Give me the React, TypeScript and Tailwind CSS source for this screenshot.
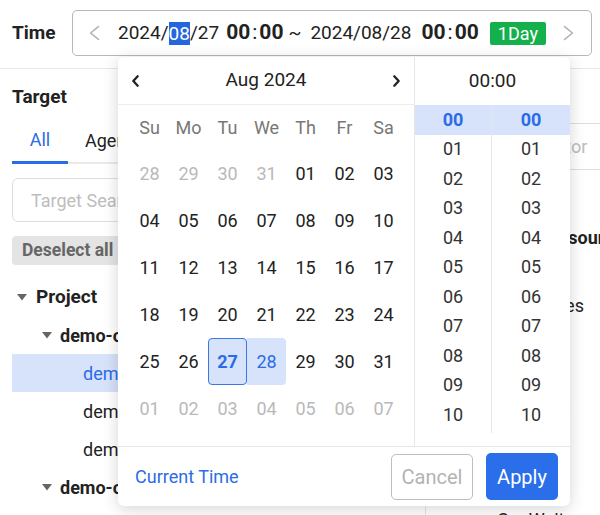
import React from "react";

const Chev = ({ dir, color, w, h, sw }: { dir: "l" | "r"; color: string; w: number; h: number; sw: number }) => (
  <svg width={w} height={h} viewBox={`0 0 ${w} ${h}`} className="shrink-0">
    <path
      d={dir === "l" ? `M${w - sw} ${sw} L${sw} ${h / 2} L${w - sw} ${h - sw}` : `M${sw} ${sw} L${w - sw} ${h / 2} L${sw} ${h - sw}`}
      fill="none"
      stroke={color}
      strokeWidth={sw}
      strokeLinecap="round"
      strokeLinejoin="round"
    />
  </svg>
);

const Caret = () => (
  <svg width="10" height="7" viewBox="0 0 10 7" className="shrink-0">
    <polygon points="0,0 10,0 5,6.5" fill="#666" />
  </svg>
);

const BoldTime = ({ cls }: { cls: string }) => (
  <span className={`flex items-center text-[21px] font-bold text-[#222] ${cls}`}>
    <span>00</span>
    <span className="mx-[2px] font-normal">:</span>
    <span>00</span>
  </span>
);

type Day = { t: string; k?: "muted" | "start" | "range" };

const weeks: Day[][] = [
  [{ t: "28", k: "muted" }, { t: "29", k: "muted" }, { t: "30", k: "muted" }, { t: "31", k: "muted" }, { t: "01" }, { t: "02" }, { t: "03" }],
  [{ t: "04" }, { t: "05" }, { t: "06" }, { t: "07" }, { t: "08" }, { t: "09" }, { t: "10" }],
  [{ t: "11" }, { t: "12" }, { t: "13" }, { t: "14" }, { t: "15" }, { t: "16" }, { t: "17" }],
  [{ t: "18" }, { t: "19" }, { t: "20" }, { t: "21" }, { t: "22" }, { t: "23" }, { t: "24" }],
  [{ t: "25" }, { t: "26" }, { t: "27", k: "start" }, { t: "28", k: "range" }, { t: "29" }, { t: "30" }, { t: "31" }],
  [{ t: "01", k: "muted" }, { t: "02", k: "muted" }, { t: "03", k: "muted" }, { t: "04", k: "muted" }, { t: "05", k: "muted" }, { t: "06", k: "muted" }, { t: "07", k: "muted" }],
];

const weekdays = ["Su", "Mo", "Tu", "We", "Th", "Fr", "Sa"];
const hours = ["00", "01", "02", "03", "04", "05", "06", "07", "08", "09", "10"];

function dayClass(k?: string) {
  if (k === "muted") return "text-[#b9b9b9]";
  if (k === "start") return "rounded-[4px] border-[1.5px] border-[#3b76e3] bg-[#d7e2fb] font-bold text-[#2b6ce6]";
  if (k === "range") return "rounded-r-[4px] bg-[#d7e2fb] text-[#2b6ce6]";
  return "text-[#222]";
}

const TimeCol = ({ border }: { border: boolean }) => (
  <div className={`w-[77px] flex flex-col ${border ? "border-r border-[#e6e6e6]" : "flex-1"}`}>
    {hours.map((h, i) => (
      <div
        key={h}
        className={`h-[29.5px] shrink-0 flex items-center justify-center text-[18px] leading-[22px] ${
          i === 0 ? "bg-[#d7e2fb] text-[#2b6ce6] font-bold" : "text-[#333]"
        }`}
      >
        {h}
      </div>
    ))}
  </div>
);

export default function App() {
  return (
    <div className="relative w-[600px] h-[515px] overflow-hidden bg-white text-[#222] [font-family:Roboto,sans-serif]">
      {/* Top bar */}
      <div className="flex h-[69px] border-b border-[#e8e8e8] pl-[12px] pt-[10px]">
        <div className="w-[60px] h-[46px] flex items-center text-[19px] font-bold">Time</div>
        <div className="flex items-center w-[520px] h-[46px] border border-[#b8b8b8] rounded-[5px] pl-[16px]">
          <Chev dir="l" color="#b3b3b3" w={11} h={16} sw={1.6} />
          <div className="ml-[18px] flex items-center text-[19px] text-[#222]">
            <span>2024/</span>
            <span className="bg-[#2366de] text-white leading-[23px]">08</span>
            <span>/27</span>
          </div>
          <BoldTime cls="ml-[7px]" />
          <span className="ml-[5px] text-[19px]">~</span>
          <span className="ml-[9px] text-[19px]">2024/08/28</span>
          <BoldTime cls="ml-[10px]" />
          <span className="ml-[11px] h-[23px] px-[8px] bg-[#14b04b] text-white text-[18px] rounded-[2px] flex items-center">
            1Day
          </span>
          <span className="ml-[17px]">
            <Chev dir="r" color="#b3b3b3" w={11} h={16} sw={1.6} />
          </span>
        </div>
      </div>

      {/* Main background */}
      <div className="flex h-[446px]">
        {/* Left panel */}
        <div className="w-[426px] shrink-0 border-r border-[#e5e5e5] pl-[12px]">
          <div className="pt-[16px] text-[19px] font-bold leading-[24px]">Target</div>
          <div className="mt-[9px] flex h-[46px] border-b-[2px] border-[#eaeaea]">
            <div className="w-[56px] flex items-center justify-center text-[18px] text-[#2b6ce6] border-b-[3px] border-[#2b6ce6] -mb-[2px]">
              All
            </div>
            <div className="pl-[17px] flex items-center text-[18px] text-[#222]">Agent</div>
            <div className="pl-[30px] flex items-center text-[18px] text-[#222]">Group</div>
          </div>
          <div className="mt-[14px] h-[44px] w-[400px] rounded-[6px] border border-[#dedede] pl-[18px] flex items-center text-[18px] text-[#bdbdbd]">
            Target Search
          </div>
          <div className="mt-[14px] h-[29px] inline-flex items-center px-[10px] bg-[#e4e4e4] rounded-[4px] text-[17.5px] font-bold text-[#666]">
            Deselect all
          </div>
          <div className="mt-[13px] flex flex-col">
            <div className="h-[38px] flex items-center pl-[5px] gap-[9px]">
              <Caret />
              <span className="text-[19px] font-bold">Project</span>
            </div>
            <div className="h-[38px] flex items-center pl-[30px] gap-[8px]">
              <Caret />
              <span className="text-[18px] font-bold">demo-cluster-01</span>
            </div>
            <div className="h-[38px] flex items-center pl-[71px] bg-[#d7e2fb] text-[18px] text-[#2b6ce6]">
              demo-node-01
            </div>
            <div className="h-[38px] flex items-center pl-[71px] text-[18px]">demo-node-02</div>
            <div className="h-[38px] flex items-center pl-[71px] text-[18px]">demo-node-03</div>
            <div className="h-[38px] flex items-center pl-[30px] gap-[8px]">
              <Caret />
              <span className="text-[18px] font-bold">demo-cluster-02</span>
            </div>
          </div>
        </div>

        {/* Right panel */}
        <div className="flex-1 min-w-0 pl-[12px] overflow-hidden">
          <div className="pt-[16px] text-[19px] font-bold leading-[24px]">Metric</div>
          <div className="mt-[14px] h-[47px] w-[300px] rounded-[6px] border border-[#dedede] pl-[18px] flex items-center text-[18px] text-[#bdbdbd] whitespace-nowrap">
            Search Indicator
          </div>
          <div className="mt-[50px] flex flex-col whitespace-nowrap text-[18px]">
            <div className="h-[34.3px] flex items-center pl-[109px] font-bold">Resource</div>
            <div className="h-[34.3px] flex items-center pl-[59px]">Cpu</div>
            <div className="h-[34.3px] flex items-center pl-[62px]">Processes</div>
            <div className="h-[34.3px] flex items-center pl-[59px]">CpuIdle</div>
            <div className="h-[34.3px] flex items-center pl-[59px]">CpuSys</div>
            <div className="h-[34.3px] flex items-center pl-[61px]">CpuTotal</div>
            <div className="h-[34.3px] flex items-center pl-[59px]">CpuUser</div>
            <div className="h-[34.3px] flex items-center pl-[59px]">CpuIrq</div>
            <div className="h-[34.3px] flex items-end pl-[59px] leading-[18px]">CpuWait</div>
          </div>
        </div>
      </div>

      {/* Date range popup */}
      <div className="absolute left-[118px] top-[57px] w-[452px] h-[449px] bg-white rounded-[6px] shadow-[0_3px_16px_rgba(0,0,0,0.17)] flex flex-col overflow-hidden">
        <div className="flex h-[389px]">
          <div className="w-[297px] shrink-0 border-r border-[#e6e6e6] flex flex-col">
            <div className="h-[48px] border-b border-[#ececec] flex items-center justify-between px-[13px]">
              <Chev dir="l" color="#222" w={9} h={14} sw={2.3} />
              <span className="text-[19px] text-[#222]">Aug 2024</span>
              <Chev dir="r" color="#222" w={9} h={14} sw={2.3} />
            </div>
            <div className="pl-[12px] grid grid-cols-[repeat(7,39px)]">
              {weekdays.map((d) => (
                <div key={d} className="h-[45px] flex items-center justify-center text-[18px] leading-[22px] text-[#777]">
                  {d}
                </div>
              ))}
              {weeks.flat().map((d, i) => (
                <div key={i} className={`h-[47px] flex items-center justify-center text-[18px] leading-[22px] ${dayClass(d.k)}`}>
                  {d.t}
                </div>
              ))}
            </div>
          </div>
          <div className="flex-1 flex flex-col">
            <div className="h-[48px] flex items-center justify-center text-[19px] text-[#222]">00:00</div>
            <div className="flex h-[328px] overflow-hidden">
              <TimeCol border />
              <TimeCol border={false} />
            </div>
          </div>
        </div>
        <div className="flex-1 border-t border-[#e6e6e6] flex items-center pl-[17px] pr-[12px]">
          <span className="text-[18px] text-[#2b6ce6]">Current Time</span>
          <div className="ml-auto flex items-center gap-[13px]">
            <div className="w-[82px] h-[46px] border border-[#bdbdbd] rounded-[5px] flex items-center justify-center text-[20px] text-[#b3b3b3]">
              Cancel
            </div>
            <div className="w-[72px] h-[47px] bg-[#2a6ee9] rounded-[5px] flex items-center justify-center text-[20px] text-white">
              Apply
            </div>
          </div>
        </div>
      </div>
    </div>
  );
}
